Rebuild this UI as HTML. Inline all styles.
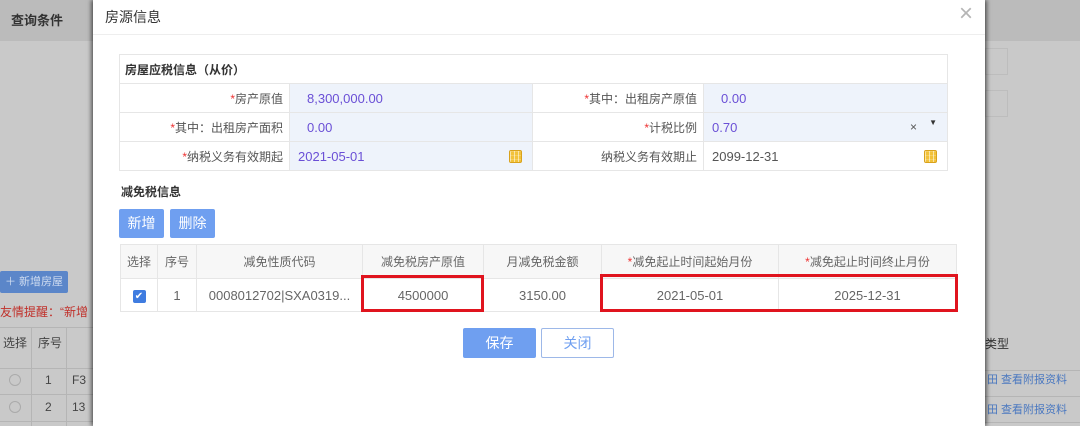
<!DOCTYPE html>
<html><head><meta charset="utf-8"><style>
*{margin:0;padding:0;box-sizing:border-box}
body{width:1080px;height:426px;overflow:hidden;background:#c9c9c9;font-family:"Liberation Sans","Noto Sans CJK SC",sans-serif;font-size:12px;color:#555;position:relative}
.a{position:absolute}
.topbar{left:0;top:0;width:1080px;height:41px;background:#bbbbbb}
.modal{left:93px;top:0;width:892px;height:426px;background:#fff;box-shadow:-2px 0 4px rgba(0,0,0,.5),2px 0 4px rgba(0,0,0,.5)}
table{border-collapse:collapse;position:absolute}
td{border:1px solid #e6e6e6;height:29px}
.lb{text-align:right;padding-right:6px;color:#555}
.v{background:#eef3fb;color:#6a4fd6;padding-left:8px;font-size:13px}
.r{color:#e33}
.t2 td{text-align:center;color:#666;font-size:12px}
.t2 .h td{background:#f7f7f7;height:34px}
.t2 .d td{height:33px;font-size:13px}
.btn{background:#6f9ff0;color:#fff;font-size:14px;text-align:center;border-radius:2px}
.cal{width:13px;height:13px;background:#f2c23a;border:1px solid #d9a21c;border-radius:2px;background-image:linear-gradient(#fff3 1px,transparent 1px),linear-gradient(90deg,#fff8 1px,transparent 1px);background-size:4px 4px}
.red{border:3px solid #e0141e}
</style></head><body>
<div class="a topbar"></div>
<div class="a" style="left:11px;top:10px;font-size:13px;font-weight:bold;color:#333">查询条件</div>
<div class="a" style="left:985px;top:48px;width:23px;height:27px;border:1px solid #bdbdbd;background:#c9c9c9"></div>
<div class="a" style="left:985px;top:90px;width:23px;height:27px;border:1px solid #bdbdbd;background:#c9c9c9"></div>
<div class="a" style="left:0;top:271px;width:68px;height:22px;background:#5b86c9;color:#cfdcf0;font-size:11px;line-height:22px;padding-left:5px;border-radius:2px">＋ 新增房屋</div>
<div class="a" style="left:0;top:303px;color:#c0302a;font-size:12px">友情提醒：“新增</div>
<div class="a" style="left:0;top:327px;width:95px;height:98px;border-top:1px solid #b5b5b5">
<div class="a" style="left:31px;top:0;width:1px;height:98px;background:#b5b5b5"></div>
<div class="a" style="left:66px;top:0;width:1px;height:98px;background:#b5b5b5"></div>
<div class="a" style="left:0;top:40px;width:95px;height:1px;background:#b5b5b5"></div>
<div class="a" style="left:0;top:66px;width:95px;height:1px;background:#b5b5b5"></div>
<div class="a" style="left:0;top:93px;width:95px;height:1px;background:#b5b5b5"></div>
<div class="a" style="left:3px;top:6px;font-size:12px;color:#444">选择</div><div class="a" style="left:38px;top:6px;color:#444">序号</div>
<div class="a" style="left:9px;top:46px;width:12px;height:12px;border:1px solid #aaa;border-radius:50%"></div>
<div class="a" style="left:9px;top:73px;width:12px;height:12px;border:1px solid #aaa;border-radius:50%"></div>
<div class="a" style="left:45px;top:45px;color:#444">1</div><div class="a" style="left:72px;top:45px;color:#444">F3</div>
<div class="a" style="left:45px;top:72px;color:#444">2</div><div class="a" style="left:72px;top:72px;color:#444">13</div>
</div>
<div class="a" style="left:985px;top:335px;color:#333">类型</div>
<div class="a" style="left:985px;top:370px;width:95px;height:1px;background:#b5b5b5"></div>
<div class="a" style="left:985px;top:396px;width:95px;height:1px;background:#b5b5b5"></div>
<div class="a" style="left:985px;top:422px;width:95px;height:1px;background:#b5b5b5"></div>
<div class="a" style="left:987px;top:371px;color:#4a78c0;font-size:11px">田 查看附报资料</div>
<div class="a" style="left:987px;top:401px;color:#4a78c0;font-size:11px">田 查看附报资料</div>

<div class="a modal">
<div class="a" style="left:12px;top:7px;font-size:14px;color:#333">房源信息</div>
<div class="a" style="left:866px;top:0px;font-size:24px;color:#b5b5b5;font-weight:lighter">×</div>
<div class="a" style="left:0;top:34px;width:892px;height:1px;background:#eee"></div>
</div>

<table style="left:119px;top:54px;width:829px">
<tr><td colspan="4" style="font-weight:bold;color:#333;padding-left:5px">房屋应税信息（从价）</td></tr>
<tr><td class="lb" style="width:170px"><span class="r">*</span>房产原值</td><td class="v" style="width:243px;padding-left:17px">8,300,000.00</td><td class="lb" style="width:171px"><span class="r">*</span>其中：出租房产原值</td><td class="v" style="padding-left:17px">0.00</td></tr>
<tr><td class="lb"><span class="r">*</span>其中：出租房产面积</td><td class="v" style="padding-left:17px">0.00</td><td class="lb"><span class="r">*</span>计税比例</td><td class="v" style="position:relative">0.70<span style="position:absolute;right:30px;top:7px;color:#555;font-size:12px">×</span><span style="position:absolute;right:10px;top:5px;color:#333;font-size:8px">▼</span></td></tr>
<tr><td class="lb"><span class="r">*</span>纳税义务有效期起</td><td class="v" style="position:relative">2021-05-01<div class="cal a" style="right:10px;top:8px"></div></td><td class="lb">纳税义务有效期止</td><td style="position:relative;padding-left:8px;color:#555;font-size:13px">2099-12-31<div class="cal a" style="right:10px;top:8px"></div></td></tr>
</table>

<div class="a" style="left:121px;top:183px;font-weight:bold;color:#333">减免税信息</div>
<div class="a btn" style="left:119px;top:209px;width:45px;height:29px;line-height:29px">新增</div>
<div class="a btn" style="left:170px;top:209px;width:45px;height:29px;line-height:29px">删除</div>

<table class="t2" style="left:120px;top:244px;width:837px">
<tr class="h"><td style="width:37px">选择</td><td style="width:39px">序号</td><td style="width:166px">减免性质代码</td><td style="width:121px">减免税房产原值</td><td style="width:118px">月减免税金额</td><td style="width:177px"><span class="r">*</span>减免起止时间起始月份</td><td><span class="r">*</span>减免起止时间终止月份</td></tr>
<tr class="d"><td><span style="display:inline-block;width:13px;height:13px;background:#3f7ce0;border-radius:2px;color:#fff;font-size:10px;line-height:13px">✔</span></td><td>1</td><td>0008012702|SXA0319...</td><td>4500000</td><td>3150.00</td><td>2021-05-01</td><td>2025-12-31</td></tr>
</table>
<div class="a red" style="left:361px;top:275px;width:123px;height:37px"></div>
<div class="a red" style="left:600px;top:274px;width:358px;height:38px"></div>

<div class="a btn" style="left:463px;top:328px;width:73px;height:30px;line-height:30px">保存</div>
<div class="a" style="left:541px;top:328px;width:73px;height:30px;line-height:28px;border:1px solid #9db8e8;color:#6f9ff0;font-size:14px;text-align:center;border-radius:2px">关闭</div>
</body></html>
